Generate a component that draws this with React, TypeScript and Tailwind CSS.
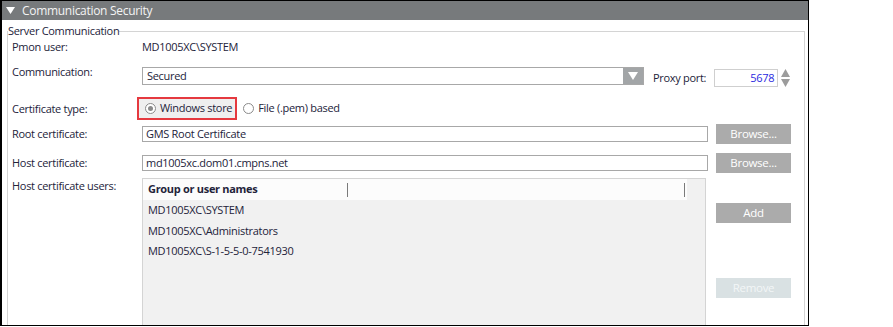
import React from "react";

// Small controls drawn to look like the WPF originals
const Radio = ({ checked }: { checked?: boolean }) => (
	<span className="flex h-[11px] w-[11px] items-center justify-center rounded-full border border-[#8a8a8a] bg-white">
		{checked && <span className="h-[5px] w-[5px] rounded-full bg-[#8a8a8a]" />}
	</span>
);

const GrayButton = ({ label, disabled }: { label: string; disabled?: boolean }) => (
	<div
		className={
			disabled
				? "flex h-[20px] w-[75px] items-center justify-center bg-[#d9e1e3] text-[11.5px] text-[#f3f6f7]"
				: "flex h-[20px] w-[75px] items-center justify-center bg-[#ababab] text-[11.5px] text-white"
		}
	>
		{label}
	</div>
);

const Label = ({ children }: { children: React.ReactNode }) => (
	<div className="w-[130px] shrink-0 leading-[16px]">{children}</div>
);

const users = [
	"MD1005XC\\SYSTEM",
	"MD1005XC\\Administrators",
	"MD1005XC\\S-1-5-5-0-7541930",
];

export default function App() {
	return (
		<div className="h-[327px] w-[893px] bg-white font-['Open_Sans',sans-serif] text-[11px] tracking-[-0.3px] text-[#23233a]">
			<div className="flex h-[326px] w-[809px] flex-col overflow-hidden border border-l-2 border-black">
				{/* Section header */}
				<div className="flex h-[19px] shrink-0 items-center gap-[7px] bg-[#777a7c] pl-[4px] text-[12px] text-[#f4f4f4]">
					<svg width="9" height="7" viewBox="0 0 9 7">
						<polygon points="0,0 9,0 4.5,7" fill="#ffffff" />
					</svg>
					<span>Communication Security</span>
				</div>

				<fieldset className="mr-[3px] ml-[5px] mt-[4px] h-[400px] border border-[#d4d4d4] px-0">
					<legend className="px-0 leading-[14px]">Server Communication</legend>
					<div className="flex flex-col pl-[4px]">
						{/* Pmon user */}
						<div className="flex h-[18px] items-center">
							<Label>Pmon user:</Label>
							<div>MD1005XC\SYSTEM</div>
						</div>

						{/* Communication */}
						<div className="mt-[8px] flex h-[24px] items-start">
							<Label>Communication:</Label>
							<div className="mt-[3px] flex h-[18px] w-[502px] border border-[#a8a8a8] bg-white">
								<div className="flex-1 pl-[4px] leading-[16px]">Secured</div>
								<div className="flex w-[20px] items-center justify-center bg-[#a2a5a7]">
									<svg width="10" height="8" viewBox="0 0 10 8">
										<polygon points="0,0 10,0 5,8" fill="#ffffff" />
									</svg>
								</div>
							</div>
							<div className="ml-[9px] mt-[5px] leading-[18px]">Proxy port:</div>
							<div className="ml-[8px] mt-[5px] flex h-[18px] w-[64px] items-center justify-end border border-[#cfcfcf] pr-[3px] text-[#2a2ae0]">
								5678
							</div>
							<div className="ml-[3px] mt-[5px] flex h-[18px] flex-col justify-between">
								<svg width="9" height="8" viewBox="0 0 9 8">
									<polygon points="4.5,0 9,8 0,8" fill="#9c9c9c" />
								</svg>
								<svg width="9" height="8" viewBox="0 0 9 8">
									<polygon points="0,0 9,0 4.5,8" fill="#9c9c9c" />
								</svg>
							</div>
						</div>

						{/* Certificate type */}
						<div className="mt-[9px] flex h-[23px] items-center">
							<div className="w-[125px] shrink-0 leading-[16px]">Certificate type:</div>
							<div className="flex h-[23px] items-center gap-[4px] border-2 border-[#e5393f] bg-[#efefef] pl-[6px] pr-[3px]">
								<Radio checked />
								<span>Windows store</span>
							</div>
							<div className="ml-[6px] flex items-center gap-[4px]">
								<Radio />
								<span>File (.pem) based</span>
							</div>
						</div>

						{/* Root certificate */}
						<div className="mt-[4px] flex h-[20px] items-center">
							<Label>Root certificate:</Label>
							<div className="flex h-[16px] w-[566px] items-center border border-[#a8a8a8] pl-[3px]">
								GMS Root Certificate
							</div>
							<div className="ml-[8px]">
								<GrayButton label="Browse..." />
							</div>
						</div>

						{/* Host certificate */}
						<div className="mt-[9px] flex h-[20px] items-center">
							<Label>Host certificate:</Label>
							<div className="flex h-[16px] w-[566px] items-center border border-[#a8a8a8] pl-[3px]">
								md1005xc.dom01.cmpns.net
							</div>
							<div className="ml-[8px]">
								<GrayButton label="Browse..." />
							</div>
						</div>

						{/* Host certificate users */}
						<div className="mt-[5px] flex items-start">
							<Label>Host certificate users:</Label>
							<div className="h-[160px] w-[564px] border border-[#d4d4d4] bg-[#f1f1f1]">
								<div className="flex h-[21px] w-[544px] items-center bg-[#fcfcfc]">
									<div className="w-[204px] pl-[5px] font-bold">Group or user names</div>
									<div className="h-[14px] w-px bg-[#7a7a7a]" />
									<div className="w-[336px]" />
									<div className="h-[14px] w-px bg-[#7a7a7a]" />
								</div>
								{users.map((u) => (
									<div key={u} className="flex h-[20.5px] items-center pl-[5px]">
										{u}
									</div>
								))}
							</div>
							<div className="ml-[10px] flex flex-col pt-[25px]">
								<GrayButton label="Add" />
								<div className="mt-[55px]">
									<GrayButton label="Remove" disabled />
								</div>
							</div>
						</div>
					</div>
				</fieldset>
			</div>
		</div>
	);
}
